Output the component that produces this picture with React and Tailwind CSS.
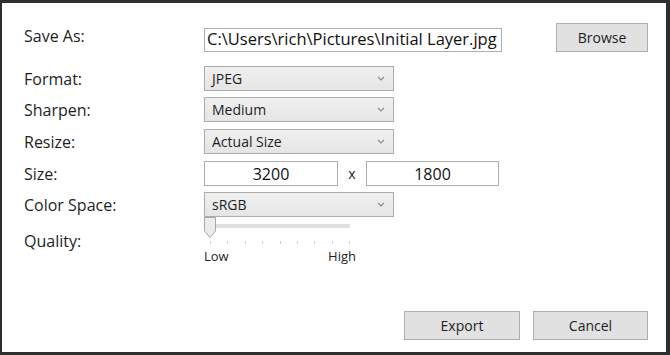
import { useState } from "react";

const Chevron = () => (
  <svg width="8" height="5" viewBox="0 0 8 5" className="shrink-0">
    <path d="M1 1 L4 4 L7 1" fill="none" stroke="#8a8a8a" strokeWidth="1.2" />
  </svg>
);

const Select = ({ value, className = "" }) => (
  <div
    className={`flex items-center justify-between w-[190px] h-[25px] pl-[7px] pr-[8px] border border-[#acacac] bg-gradient-to-b from-[#f0f0f0] to-[#e5e5e5] text-[14px] text-[#1e1e1e] ${className}`}
  >
    <span>{value}</span>
    <Chevron />
  </div>
);

const Label = ({ children, className = "" }) => (
  <div className={`w-[180px] shrink-0 text-[16px] text-[#1e1e1e] ${className}`}>{children}</div>
);

const App = () => {
  const [quality] = useState(0);
  const ticks = [0, 1, 2, 3, 4, 5, 6, 7, 8];

  return (
    <div
      className="w-[670px] h-[355px] bg-[#2e2e2e] pt-[3px] pl-[2px] pr-[4px] pb-[3px]"
      style={{ fontFamily: '"Open Sans", "Noto Sans", sans-serif' }}
    >
      <div className="w-full h-full bg-white pl-[22px] pr-[18px] pt-[19px] flex flex-col">
        {/* save as */}
        <div className="flex items-center h-[30px]">
          <Label className="-mt-[2px]">Save As:</Label>
          <div className="w-[298px] h-[24px] mt-[5px] border border-[#abadb3] flex items-center pl-[2px] text-[16.5px] text-[#111] whitespace-nowrap overflow-hidden">
            C:\Users\rich\Pictures\Initial Layer.jpg
          </div>
          <button className="ml-auto w-[92px] h-[29px] border border-[#adadad] bg-[#e1e1e1] text-[14px] text-[#1e1e1e]">
            Browse
          </button>
        </div>

        <div className="flex items-center mt-[14px]">
          <Label>Format:</Label>
          <Select value="JPEG" />
        </div>
        <div className="flex items-center mt-[6px]">
          <Label>Sharpen:</Label>
          <Select value="Medium" />
        </div>
        <div className="flex items-center mt-[7px]">
          <Label>Resize:</Label>
          <Select value="Actual Size" />
        </div>
        <div className="flex items-center mt-[7px]">
          <Label>Size:</Label>
          <div className="w-[134px] h-[25px] border border-[#abadb3] flex items-center justify-center text-[16px] text-[#111]">
            3200
          </div>
          <span className="w-[28px] text-center text-[14px] text-[#222]">x</span>
          <div className="w-[133px] h-[25px] border border-[#abadb3] flex items-center justify-center text-[16px] text-[#111]">
            1800
          </div>
        </div>
        <div className="flex items-center mt-[6px]">
          <Label>Color Space:</Label>
          <Select value="sRGB" />
        </div>

        {/* quality slider */}
        <div className="flex items-start">
          <Label className="mt-[12px]">Quality:</Label>
          <div className="w-[152px] flex flex-col">
            <div className="relative h-[21px]">
              <div className="absolute left-[12px] right-[6px] top-[7px] h-[4px] bg-[#e0e0e0]" />
              <svg
                width="13"
                height="22"
                viewBox="0 0 13 22"
                className="absolute top-0"
                style={{ left: quality }}
              >
                <path
                  d="M0.5 0.5 H11.5 V14 L6 20.5 L0.5 14 Z"
                  fill="#ececec"
                  stroke="#a9a9a9"
                  strokeWidth="1"
                />
              </svg>
            </div>
            <div className="flex justify-between w-[140px] ml-[6px] mt-[3px] h-[3px]">
              {ticks.map((t) => (
                <div key={t} className="w-px h-[3px] bg-[#cfcfcf]" />
              ))}
            </div>
            <div className="flex justify-between w-[152px] mt-[3px] text-[13px] text-[#1e1e1e]">
              <span>Low</span>
              <span>High</span>
            </div>
          </div>
        </div>

        {/* buttons */}
        <div className="flex justify-end gap-[13px] mt-[44px]">
          <button className="w-[116px] h-[29px] border border-[#adadad] bg-[#e1e1e1] text-[14px] text-[#1e1e1e]">
            Export
          </button>
          <button className="w-[115px] h-[29px] border border-[#adadad] bg-[#e1e1e1] text-[14px] text-[#1e1e1e]">
            Cancel
          </button>
        </div>
      </div>
    </div>
  );
};

export default App;
